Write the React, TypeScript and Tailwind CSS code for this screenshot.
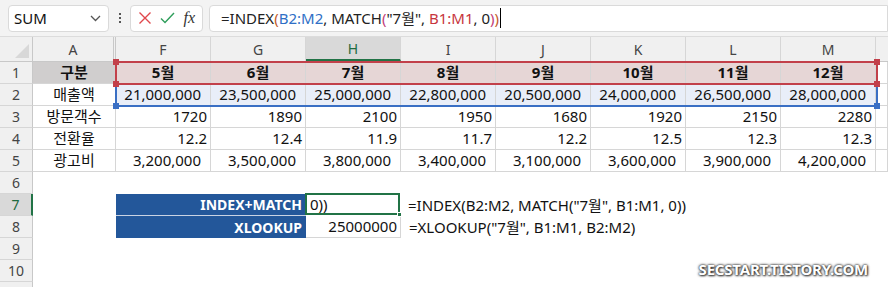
import React from 'react';

const FONT = { fontFamily: '"Noto Sans", "Noto Sans CJK KR", sans-serif' };

const months = ['5월', '6월', '7월', '8월', '9월', '10월', '11월', '12월'];
const cols = ['F', 'G', 'H', 'I', 'J', 'K', 'L', 'M'];

// 시트 데이터 (행 2~5)
const rows = [
    { label: '매출액', values: ['21,000,000', '23,500,000', '25,000,000', '22,800,000', '20,500,000', '24,000,000', '26,500,000', '28,000,000'], pad: 'pr-[9px]', bg: 'bg-[#e9eef8]' },
    { label: '방문객수', values: ['1720', '1890', '2100', '1950', '1680', '1920', '2150', '2280'], pad: 'pr-[3px]', bg: '' },
    { label: '전환율', values: ['12.2', '12.4', '11.9', '11.7', '12.2', '12.5', '12.3', '12.3'], pad: 'pr-[3px]', bg: '' },
    { label: '광고비', values: ['3,200,000', '3,500,000', '3,800,000', '3,400,000', '3,100,000', '3,600,000', '3,900,000', '4,200,000'], pad: 'pr-[9px]', bg: '' },
];

const line = 'border-r border-b border-[#d6d6d6]';

function RowHead({ n, active }: { n?: number; active?: boolean }) {
    return (
        <div
            className={`w-[33px] h-[22px] shrink-0 flex items-center justify-center text-[14px] border-b border-[#d6d6d6] ${
                active ? 'bg-[#d9d9d9] text-[#1e6b3f] border-r-2 border-r-[#217346]' : 'bg-[#f0f0f0] text-[#444] border-r border-r-[#c8c8c8]'
            }`}
        >
            {n}
        </div>
    );
}

function FormulaText() {
    return (
        <span>
            =INDEX<span className="text-[#c35b2b]">(</span>
            <span className="text-[#2f6fc6]">B2:M2</span>, MATCH<span className="text-[#c2407a]">(</span>"7월",{' '}
            <span className="text-[#c7353d]">B1:M1</span>, 0<span className="text-[#c2407a]">)</span>
            <span className="text-[#c35b2b]">)</span>
        </span>
    );
}

export default function App() {
    return (
        <div className="w-[888px] h-[287px] overflow-hidden bg-white text-[#111] relative" style={FONT}>
            {/* 수식 입력줄 */}
            <div className="h-[37px] bg-[#f3f3f3] flex items-center border-b border-[#dcdcdc]">
                <div className="ml-[8px] w-[101px] h-[27px] bg-white border border-[#dadada] rounded-[4px] flex items-center justify-between pl-[5px] pr-[7px] text-[15px]">
                    <span>SUM</span>
                    <svg width="11" height="7" viewBox="0 0 11 7" fill="none" stroke="#555" strokeWidth="1.3">
                        <path d="M1 1l4.5 4.5L10 1" />
                    </svg>
                </div>
                <div className="w-[21px] flex flex-col items-center gap-[2px]">
                    <span className="w-[2px] h-[2px] bg-[#555]" />
                    <span className="w-[2px] h-[2px] bg-[#555]" />
                    <span className="w-[2px] h-[2px] bg-[#555]" />
                </div>
                <div className="w-[73px] h-[27px] bg-white border border-[#dadada] rounded-[4px] flex items-center justify-between px-[7px]">
                    <svg width="14" height="14" viewBox="0 0 14 14" stroke="#e0474c" strokeWidth="1.4">
                        <path d="M1.5 1.5l11 11M12.5 1.5l-11 11" />
                    </svg>
                    <svg width="15" height="12" viewBox="0 0 15 12" fill="none" stroke="#2e9e5b" strokeWidth="1.4">
                        <path d="M1 6.5l4 4L14 1" />
                    </svg>
                    <span className="italic text-[16px] text-[#333]" style={{ fontFamily: '"Liberation Serif", serif' }}>
                        fx
                    </span>
                </div>
                <div className="ml-[6px] flex-1 h-[27px] bg-white border border-[#dadada] rounded-l-[4px] flex items-center pl-[11px] text-[15px] text-[#222]">
                    <FormulaText />
                    <span className="w-[1px] h-[20px] bg-black ml-[1px]" />
                </div>
            </div>

            {/* 시트 */}
            <div className="relative">
                {/* 열 머리글 */}
                <div className="flex h-[25px] bg-[#f0f0f0] text-[14px] text-[#444] border-b border-[#c8c8c8]">
                    <div className="w-[33px] shrink-0 border-r border-[#c8c8c8] relative">
                        <svg className="absolute right-[3px] bottom-[3px]" width="14" height="14" viewBox="0 0 14 14">
                            <path d="M14 0V14H0Z" fill="#d8d8d8" />
                        </svg>
                    </div>
                    <div className="w-[83px] shrink-0 flex items-center justify-center border-r-[3px] border-double border-[#c8c8c8]">A</div>
                    {cols.map((c) => (
                        <div
                            key={c}
                            className={`w-[95px] shrink-0 flex items-center justify-center border-r border-[#d6d6d6] ${
                                c === 'H' ? 'bg-[#d9d9d9] text-[#1e6b3f] border-b-2 border-b-[#217346]' : ''
                            }`}
                        >
                            {c}
                        </div>
                    ))}
                    <div className="flex-1" />
                </div>

                {/* 1행 */}
                <div className="flex text-[15px]">
                    <RowHead n={1} />
                    <div className={`w-[83px] h-[22px] shrink-0 flex items-center justify-center font-bold bg-[#d0cece] ${line}`}>구분</div>
                    {months.map((m) => (
                        <div key={m} className={`w-[95px] h-[22px] shrink-0 flex items-center justify-center font-bold bg-[#e6d6d6] ${line}`}>
                            {m}
                        </div>
                    ))}
                    <div className={`flex-1 h-[22px] ${line}`} />
                </div>

                {/* 2~5행 */}
                {rows.map((r, i) => (
                    <div key={r.label} className="flex text-[15px]">
                        <RowHead n={i + 2} />
                        <div className={`w-[83px] h-[22px] shrink-0 flex items-center justify-center ${line}`}>{r.label}</div>
                        {r.values.map((v, j) => (
                            <div key={j} className={`w-[95px] h-[22px] shrink-0 flex items-center justify-end ${r.pad} ${r.bg} ${line}`}>
                                {v}
                            </div>
                        ))}
                        <div className={`flex-1 h-[22px] ${line}`} />
                    </div>
                ))}

                {/* 6행 */}
                <div className="flex">
                    <RowHead n={6} />
                    <div className="flex-1 h-[22px]" />
                </div>

                {/* 7행 */}
                <div className="flex text-[15px]">
                    <RowHead n={7} active />
                    <div className="w-[83px] shrink-0" />
                    <div className="w-[190px] h-[22px] shrink-0 bg-[#23579a] text-white font-bold text-[14px] flex items-center justify-end pr-[4px] border-b border-[#c9d3e3]">
                        INDEX+MATCH
                    </div>
                    <div className="w-[95px] h-[22px] shrink-0 flex items-center pl-[3px] border-2 border-[#217346] relative -mt-[1px] -ml-[1px] mr-[-1px]">
                        0))
                        <span className="absolute -right-[4px] -bottom-[4px] w-[5px] h-[5px] bg-[#217346] border border-white" />
                    </div>
                    <div className="pl-[9px] flex items-center h-[22px] whitespace-nowrap">=INDEX(B2:M2, MATCH("7월", B1:M1, 0))</div>
                </div>

                {/* 8행 */}
                <div className="flex text-[15px]">
                    <RowHead n={8} />
                    <div className="w-[83px] shrink-0" />
                    <div className="w-[190px] h-[22px] shrink-0 bg-[#23579a] text-white font-bold text-[14px] flex items-center justify-end pr-[4px]">
                        XLOOKUP
                    </div>
                    <div className="w-[95px] h-[22px] shrink-0 flex items-center justify-end pr-[3px] border-r border-b border-[#d6d6d6]">25000000</div>
                    <div className="pl-[8px] flex items-center h-[22px] whitespace-nowrap">=XLOOKUP("7월", B1:M1, B2:M2)</div>
                </div>

                {[9, 10].map((n) => (
                    <div key={n} className="flex">
                        <RowHead n={n} />
                        <div className="flex-1 h-[22px]" />
                    </div>
                ))}
                <div className="flex">
                    <RowHead />
                    <div className="flex-1 h-[22px]" />
                </div>

                {/* 수식 참조 범위 표시 */}
                <div className="absolute left-[115px] top-[47px] w-[763px] h-[23px] border-2 border-t-0 border-[#3a6fc4] pointer-events-none" />
                <div className="absolute left-[115px] top-[24px] w-[763px] h-[24px] border-2 border-[#c2404a] pointer-events-none" />
                <span className="absolute left-[113px] top-[22px] w-[6px] h-[6px] bg-[#c2404a]" />
                <span className="absolute left-[113px] top-[44px] w-[6px] h-[6px] bg-[#c2404a]" />
                <span className="absolute left-[874px] top-[22px] w-[6px] h-[6px] bg-[#c2404a]" />
                <span className="absolute left-[874px] top-[44px] w-[6px] h-[6px] bg-[#c2404a]" />
                <span className="absolute left-[113px] top-[66px] w-[6px] h-[6px] bg-[#3a6fc4]" />
                <span className="absolute left-[874px] top-[66px] w-[6px] h-[6px] bg-[#3a6fc4]" />
            </div>

            {/* 워터마크 */}
            <div className="absolute right-[20px] bottom-[7px] text-white font-bold text-[15px] tracking-[-0.2px] [text-shadow:0_0_2px_#333,0_0_3px_#333,1px_1px_2px_#555]">
                SECSTART.TISTORY.COM
            </div>
        </div>
    );
}
